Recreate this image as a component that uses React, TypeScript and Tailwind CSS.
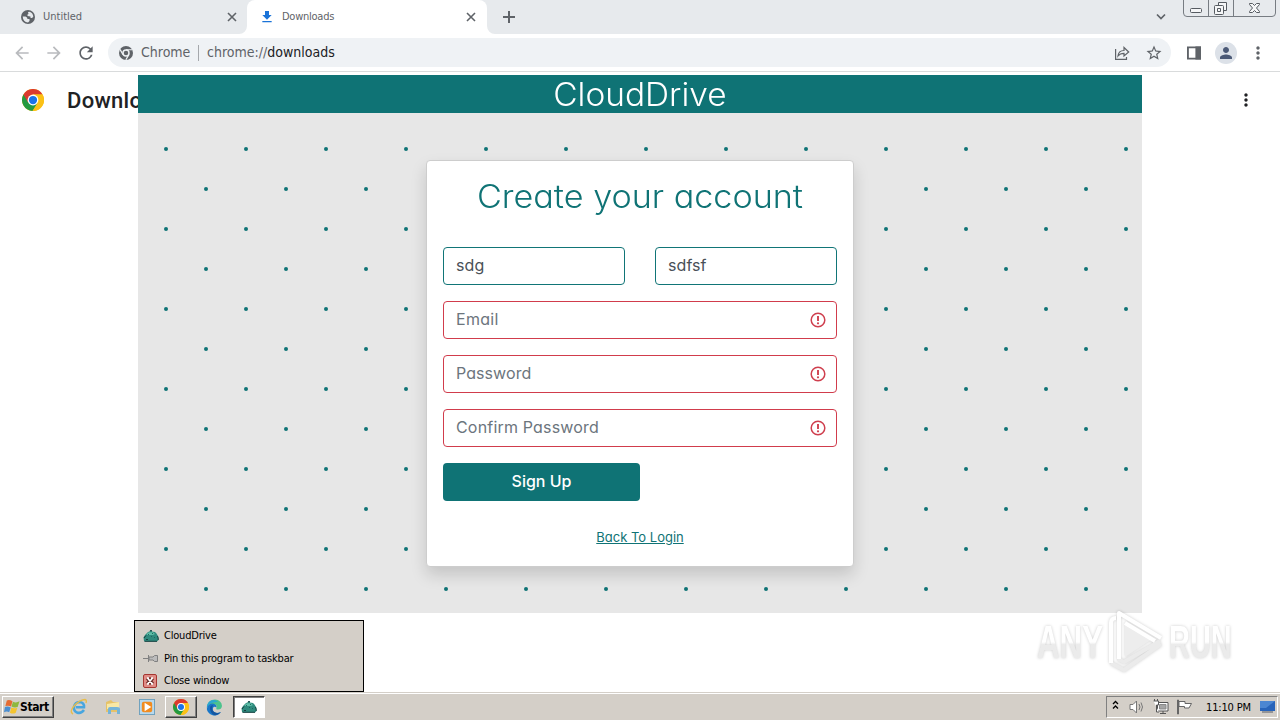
import React from "react";
import { MdArrowBack, MdArrowForward, MdRefresh, MdStarBorder, MdMoreVert, MdPerson, MdFileDownload } from "react-icons/md";

const ui = "font-['DejaVu_Sans_Condensed','DejaVu_Sans',sans-serif] [font-stretch:condensed]";
const geo = "font-['Inter',sans-serif] [font-feature-settings:'cv11']";

function ChromeLogo({ size }: { size: number }) {
  return (
    <svg width={size} height={size} viewBox="0 0 24 24">
      <circle cx="12" cy="12" r="12" fill="#fbc116" />
      <path d="M12 12 L1.6 6 A12 12 0 0 0 11.5 24 L17.2 15Z" fill="#249a41" />
      <path d="M12 6H22.4A12 12 0 0 0 1.6 6L6.8 15Z" fill="#db3a2f" />
      <path d="M12 6H22.4A12 12 0 0 1 11.5 24L17.2 15Z" fill="#fbc116" />
      <circle cx="12" cy="12" r="5.9" fill="#fff" />
      <circle cx="12" cy="12" r="4.5" fill="#1a73e8" />
    </svg>
  );
}

function ChromeMono() {
  return (
    <svg width="14" height="14" viewBox="0 0 24 24">
      <circle cx="12" cy="12" r="12" fill="#5f6368" />
      <circle cx="12" cy="12" r="6.4" fill="#eff2f5" />
      <circle cx="12" cy="12" r="3.9" fill="#5f6368" />
      <path d="M12 6.4H22.7M6.9 14.8L1.7 5.8M16.9 14.8L11.7 23.8" stroke="#eff2f5" strokeWidth="2" />
    </svg>
  );
}

function Globe() {
  return (
    <svg width="14" height="14" viewBox="0 0 14 14">
      <circle cx="7" cy="7" r="7" fill="#5f6368" />
      <path d="M1.700 6.500L4.500 6.500Q6.500 7 6.500 9H8.500V11L7 12.500Q2 12.200 1.700 6.500ZM7 2L8.500 1.800Q12 3 12.300 6.800L11 8H9.500V6.500L6.500 6V4.500L7.500 4Z" fill="#e7eaed" />
    </svg>
  );
}

function Cross() {
  return <svg width="14" height="14" viewBox="0 0 14 14" stroke="#5f6368" strokeWidth="1.600"><path d="M3 3L11 11M11 3L3 11" /></svg>;
}

function Turtle() {
  return (
    <svg width="16" height="14" viewBox="0 0 16 14">
      <path d="M1 12L0.500 8.500L2 6L3.500 4.500L5 3L6.500 2.500L7 1.500H9V2.500L12 3L13.500 4.500L15 7L15.500 11L14 12.500H2Z" fill="#2f8a7d" />
      <path d="M3.500 5L6 3.200H10L12 5L10 6H4Z" fill="#5dbca6" />
      <path d="M1 9L3 6.500M1.500 12.300H14M14.500 7L15.200 9V11M7 1.700H9M3 10.500H5" stroke="#163f3f" fill="none" />
      <path d="M5 5.500H6M9 4.500H10M8 7.500H9M11 8.500H12" stroke="#1f675e" />
    </svg>
  );
}

function Invalid() {
  return (
    <svg width="16" height="16" viewBox="0 0 16 16" fill="none" stroke="#cf3f4e" strokeWidth="1.500">
      <circle cx="8" cy="8" r="6.800" />
      <path d="M8 4V9" strokeWidth="1.900" />
      <circle cx="8" cy="11.300" r="1.100" fill="#cf3f4e" stroke="none" />
    </svg>
  );
}

function TabStrip() {
  return (
    <div className={`flex h-[34px] shrink-0 bg-[#e7eaed] text-[#5f6368] ${ui}`}>
      <div className="flex w-[247px] items-center pr-2 pl-[21px] text-[11px]">
        <Globe />
        <span className="ml-2 grow pt-px">Untitled</span>
        <Cross />
      </div>
      <div className="relative flex w-[240px] items-center rounded-t-lg bg-white pr-[9px] pl-[12px] text-[11px]">
        <svg className="absolute bottom-0 -left-2" width="8" height="8"><path d="M8 0V8H0A8 8 0 0 0 8 0" fill="#fff" /></svg>
        <svg className="absolute -right-2 bottom-0" width="8" height="8"><path d="M0 0V8H8A8 8 0 0 1 0 0" fill="#fff" /></svg>
        <MdFileDownload size={16} color="#1a73d8" />
        <span className="ml-[7px] grow pt-px tracking-[-0.25px]">Downloads</span>
        <Cross />
      </div>
      <div className="flex grow items-center pl-[15px]">
        <svg width="14" height="14" viewBox="0 0 14 14" stroke="#5f6368" strokeWidth="2"><path d="M7 1V13M1 7H13" /></svg>
      </div>
      <svg className="mt-[13px] mr-[17px]" width="10" height="8" viewBox="0 0 10 8" fill="none" stroke="#5f6368" strokeWidth="1.700"><path d="M1 1.500L5 5.500L9 1.500" /></svg>
      <svg width="97" height="18" viewBox="0 0 97 18" fill="none" stroke="#777c82">
        <path d="M0.500 0V13Q0.500 16.500 4 16.500H89Q92.500 16.500 92.500 13V0M25.500 0V16M50.500 0V16" />
        <g stroke="#565b61" fill="#f5f6f7">
          <rect x="7.500" y="8.500" width="11" height="4" rx="1" />
          <path d="M35.500 2.500H43.500V10.500H35.500Z" />
          <rect x="31.500" y="5.500" width="9" height="9" rx="1" />
          <path d="M34.500 8.500H37.500V11.500H34.500Z" />
          <path d="M66.500 3.500H69.500L71.500 5.500L73.500 3.500H76.500V4.500L73.500 8L76.500 11.500V12.500H73.500L71.500 10.500L69.500 12.500H66.500V11.500L69.500 8L66.500 4.500Z" />
        </g>
      </svg>
    </div>
  );
}

function Toolbar() {
  return (
    <div className={`flex h-[38px] shrink-0 items-center border-b border-[#d9dbdc] bg-white pl-3 text-[#5f6368] ${ui}`}>
      <MdArrowBack size={20} color="#b9bbbe" />
      <MdArrowForward size={20} color="#b9bbbe" className="ml-3" />
      <MdRefresh size={20} className="ml-3" />
      <div className="ml-3 flex h-[29px] w-[1063px] items-center rounded-full bg-[#eff2f5] pr-[8px] pl-[11px] text-[14px]">
        <ChromeMono />
        <span className="ml-[8px] w-[50px] whitespace-nowrap">Chrome</span>
        <span className="mx-[7px] h-4 w-px bg-[#a5a8ac]" />
        <span className="ml-px grow">chrome://<span className="text-[#202124]">downloads</span></span>
        <svg width="16" height="16" viewBox="0 0 16 16" fill="none" stroke="#5f6368" strokeWidth="1.200">
          <path d="M1.600 4V14.400H12.500V12M4 11Q4.500 5.500 10 5.500V2.500L14.700 7L10 11V8.300Q6 8.300 4 11Z" />
        </svg>
        <MdStarBorder size={18} className="ml-[15px]" />
      </div>
      <svg className="ml-[16px]" width="14" height="14" viewBox="0 0 15 14"><path d="M1 1H14V13H1Z" fill="none" stroke="#5f6368" strokeWidth="2" /><path d="M9 0H15V14H9Z" fill="#5f6368" /></svg>
      <span className="ml-[14px] flex size-[22px] items-center justify-center rounded-full bg-[#dce1e8]"><MdPerson size={18} color="#4c5a77" /></span>
      <MdMoreVert size={20} className="ml-[11px]" />
    </div>
  );
}

function Field({ text, invalid, filled }: { text: string; invalid?: boolean; filled?: boolean }) {
  return (
    <div className={`flex h-[38px] items-center justify-between rounded border bg-white pr-[10px] pl-3 text-[16px] font-[370] ${invalid ? "border-[#d13c4c]" : "border-[#117577]"} ${filled ? "text-[#495057]" : "text-[#6c757d]"}`}>
      <span className={`pb-0.5 ${text === "Confirm Password" ? "tracking-[0.18px]" : text === "Email" ? "tracking-[0.3px]" : "tracking-[0.07px]"}`}>{text}</span>
      {invalid && <Invalid />}
    </div>
  );
}

function Dots() {
  const dots: React.ReactElement[] = [];
  for (let r = 0; r < 12; r++)
    for (let c = 0; c < 13; c++) {
      const x = 28 + (r % 2) * 40 + c * 80;
      if (x < 1000) dots.push(<circle key={`${r}-${c}`} cx={x} cy={36 + r * 40} r="2" />);
    }
  return <svg className="absolute inset-0" width="1004" height="500" fill="#0f7375">{dots}</svg>;
}

function CloudWindow() {
  return (
    <div className={`absolute top-[75px] left-[138px] flex h-[538px] w-[1004px] flex-col bg-[#e7e7e7] ${geo}`}>
      <div className="flex h-[38px] shrink-0 items-center justify-center bg-[#0f7375] pt-0.5 text-[32px] leading-none font-[360] text-white"><span className="scale-x-[1.045]">CloudDrive</span></div>
      <div className="relative grow">
        <Dots />
        <div className="relative mx-auto mt-[47px] flex h-[407px] w-[428px] flex-col rounded border border-[#cdcdcd] bg-white px-4 shadow-[0_8px_16px_rgba(0,0,0,0.15)]">
          <h1 className="mt-[17px] h-[69px] scale-x-[1.067] text-center text-[32px] leading-[38px] font-[360] whitespace-nowrap text-[#0f7375]">Create your account</h1>
          <div className="flex flex-col gap-4">
            <div className="grid grid-cols-2 gap-[30px]"><Field text="sdg" filled /><Field text="sdfsf" filled /></div>
            <Field text="Email" invalid />
            <Field text="Password" invalid />
            <Field text="Confirm Password" invalid />
            <button className="h-[38px] w-[197px] rounded bg-[#0f7375] pb-0.5 text-[16px] font-medium text-white">Sign Up</button>
          </div>
          <a className="mt-[27px] text-center text-[13px] text-[#0f7375] underline">Back To Login</a>
        </div>
      </div>
    </div>
  );
}

function TaskMenu() {
  return (
    <div className={`absolute top-[620px] left-[134px] flex h-[72px] w-[230px] flex-col border border-black bg-[#d4cfc8] pt-[4px] pl-2 text-[11px] text-black ${ui}`}>
      <div className="flex h-[22px] items-center gap-[5px]"><Turtle /><span className="tracking-[-0.2px]">CloudDrive</span></div>
      <div className="flex h-[24px] items-center gap-[5px]">
        <svg width="16" height="10" viewBox="0 0 16 10" fill="#bbb" stroke="#808080"><path d="M0 4.500H5M5.500 1V8M6 3H10L11.500 1.500H14.500V7.500H11.500L10 6H6Z" /></svg>
        <span className="pt-px tracking-[-0.2px]">Pin this program to taskbar</span>
      </div>
      <div className="flex h-[20px] items-center gap-[7px]">
        <svg width="14" height="14" viewBox="0 0 14 14"><rect x=".5" y=".5" width="13" height="13" rx="1.500" fill="#df8c86" stroke="#a63631" /><path d="M4.500 4L9.500 10M9.500 4L4.500 10" stroke="#6b2c28" strokeWidth="4" /><path d="M4.500 4L9.500 10M9.500 4L4.500 10M4 4H6M8 4H10M4 10H6M8 10H10" stroke="#fff" strokeWidth="1.600" /></svg>
        <span className="pt-px tracking-[-0.2px]">Close window</span>
      </div>
    </div>
  );
}

function Watermark() {
  return (
    <div className="absolute top-[608px] left-[1037px] flex h-[68px] w-[197px] items-center justify-between font-['Liberation_Sans',sans-serif] text-[46px] leading-none font-bold text-transparent drop-shadow-[0_0_1.5px_rgba(0,0,0,0.2)]">
      <span className="w-[66px] origin-left scale-x-[.68]"><span className="bg-linear-to-b from-white from-50% to-[#ebebeb] to-55% bg-clip-text">ANY</span></span>
      <svg width="58" height="66" viewBox="0 0 58 66" fill="none" strokeWidth="4" strokeLinejoin="round">
        <path d="M18 15V48L44 31Z" fill="#ededed" />
        <path d="M4 54L17 61L54 35M11 50L17 53L53 32" stroke="#ebebeb" />
        <path d="M4 54V14Q4 9 9 9M12 50V4L54 29M18 14L48 32" stroke="#fff" />
      </svg>
      <span className="w-[65px] origin-left scale-x-[.63]"><span className="bg-linear-to-b from-white from-50% to-[#ebebeb] to-55% bg-clip-text">RUN</span></span>
    </div>
  );
}

function Explorer() {
  return <svg width="18" height="18" viewBox="0 0 18 18"><path d="M14 12Q11 16 7 14.500Q3.500 13 4 9Q5 4 9.500 4Q14.500 4.500 14 9.200H6" fill="none" stroke="#48a6df" strokeWidth="2.600" /><path d="M3 16Q-1 14 4 8Q10 1.500 15 1.500Q17 2 16 5" fill="none" stroke="#e8bd4b" strokeWidth="1.400" /></svg>;
}

function Taskbar() {
  return (
    <div className={`flex h-[28px] shrink-0 items-center border-t border-[#d4cfc8] bg-[#d4cfc8] pt-px text-black shadow-[inset_0_1px_0_#fff] ${ui}`}>
      <div className="ml-[2px] flex h-[22px] w-[52px] items-center border border-t-white border-r-[#404040] border-b-[#404040] border-l-white shadow-[inset_-1px_-1px_#808080]">
        <svg width="16" height="16" viewBox="0 0 17 16" className="ml-px shrink-0">
          <path d="M3 1Q6 0 9 2L7.500 7.500Q5 6 1.500 7Z" fill="#e56b32" /><path d="M9.500 2.500Q13 4 16.500 2L14.500 8Q11 9 8 7.500Z" fill="#8eb83e" />
          <path d="M1 8Q4 7 7.200 8.500L5.500 13.500Q3 12 0 13.500Z" fill="#4b8ed0" /><path d="M7.800 8.500Q11 10 14.200 8.800L12.500 14Q9.500 16 6.300 14Z" fill="#f4c42f" />
        </svg>
        <span className="text-[12px] font-bold tracking-[-0.400px]">Start</span>
      </div>
      <div className="ml-[16px]"><Explorer /></div>
      <svg className="ml-[17px]" width="17" height="16" viewBox="0 0 17 16"><path d="M1 3L6 1L8 3H14V13H1Z" fill="#e5c269" /><path d="M2 5L14 3V10H2Z" fill="#f8e8a5" /><path d="M3 15V10Q3 8 5 8H12Q15 8 15 10V15H12V11H6V15Z" fill="#75b4d8" /></svg>
      <svg className="ml-[17px]" width="16" height="16" viewBox="0 0 17 17"><rect x=".5" y=".5" width="16" height="16" fill="#b8d9ee" stroke="#6c9fbd" /><rect x="3" y="3" width="11" height="11" rx="2" fill="#f18c20" /><path d="M6 4L13 8.500L6 13Z" fill="#fff" /></svg>
      <div className="ml-[10px] flex h-[22px] w-8 items-center justify-center border border-t-white border-r-[#404040] border-b-[#404040] border-l-white shadow-[inset_-1px_-1px_#808080]"><ChromeLogo size={16} /></div>
      <svg className="ml-[9px]" width="17" height="17" viewBox="0 0 17 17">
        <path d="M1 8Q2 .5 9 .5Q15.500 1 16 7Q15.500 10.500 12 10.500Q9.500 10.500 10.500 9Q11.500 5.500 7.500 5Q3 4.500 1 8Z" fill="#4cc38d" />
        <path d="M.8 9Q1 1 8 1Q10 1 12 3Q4 2 .8 9Z" fill="#2ba7d0" />
        <path d="M.8 10Q1.500 4.500 7 4.500Q11 5.500 10.500 8.500Q8 7 7 9Q6 13 11 14Q13 14 15 13Q11 18 6 16Q1.500 14 .8 10Z" fill="#1976c8" />
        <path d="M4 9Q4 6.500 7 6Q5 10 7.500 12.500Q10 15 15 13Q12 17 8 16Q4 14 4 9Z" fill="#1556a0" />
      </svg>
      <div className="ml-[10px] flex h-[22px] w-8 items-center justify-center border border-t-[#404040] border-r-white border-b-white border-l-[#404040] bg-white shadow-[inset_1px_1px_#808080]"><Turtle /></div>
      <div className="mr-px ml-auto flex h-[22px] w-[172px] items-center border border-t-[#808080] border-r-white border-b-white border-l-[#808080] pl-[5px] text-[11px]">
        <svg className="mb-1" width="7" height="10" viewBox="0 0 7 10" fill="none" stroke="#000" strokeWidth="1.300"><path d="M1 4L3.500 1.500L6 4M1 8.500L3.500 6L6 8.500" /></svg>
        <svg className="ml-[10px] shrink-0" width="17" height="16" viewBox="0 0 17 16" fill="none" stroke="#777"><path d="M1 5.500H4L7.500 2V14L4 10.500H1Z" fill="#fff" /><path d="M10 5Q12 8 10 11M12 3.500Q15 8 12 12.500" /></svg>
        <svg className="ml-[7px] shrink-0" width="16" height="16" viewBox="0 0 16 16" fill="#fff" stroke="#555"><path d="M4.500 3.500H15V12H4.500Z" /><path d="M6.500 5.500H13V10H6.500Z" fill="#a5a5a5" stroke="#888" /><path d="M7 14.500H13M10 12V14M.5 2H5.500V6H3.500V13H6M1.500 0V2M4.500 0V2" /></svg>
        <svg className="ml-[7px] shrink-0" width="17" height="16" viewBox="0 0 17 16" fill="#fff" stroke="#666"><path d="M1.500 1H2.500V15H1.500ZM3 2.500H9V4.500H15.500L13 9H8.500V7.500H3Z" /></svg>
        <span className="ml-[13px] w-[46px] shrink-0 pt-0.5 tracking-[-0.150px] whitespace-nowrap">11:10 PM</span>
        <svg className="ml-[8px] shrink-0" width="15" height="14" viewBox="0 0 15 14"><path d="M0 1H15V11H0Z" fill="#2864ba" /><path d="M0 1H15L6 8H0Z" fill="#4b86d2" /><path d="M2 12H13" stroke="#555b66" /></svg>
      </div>
      <span className="w-px" />
    </div>
  );
}

export default function App() {
  return (
    <div className="relative flex h-[720px] w-[1280px] flex-col overflow-hidden bg-white">
      <TabStrip />
      <Toolbar />
      <div className="flex grow items-start justify-between pt-[18px] pr-[24px] pl-[22px] text-[#202124]">
        <div className="-mt-px flex items-start gap-[23px]"><ChromeLogo size={22} /><span className="pt-px font-['Roboto',sans-serif] text-[22px] leading-[22px] font-medium tracking-[0.3px]">Downloads</span></div>
        <MdMoreVert size={20} />
      </div>
      <CloudWindow />
      <Watermark />
      <Taskbar />
      <TaskMenu />
    </div>
  );
}
